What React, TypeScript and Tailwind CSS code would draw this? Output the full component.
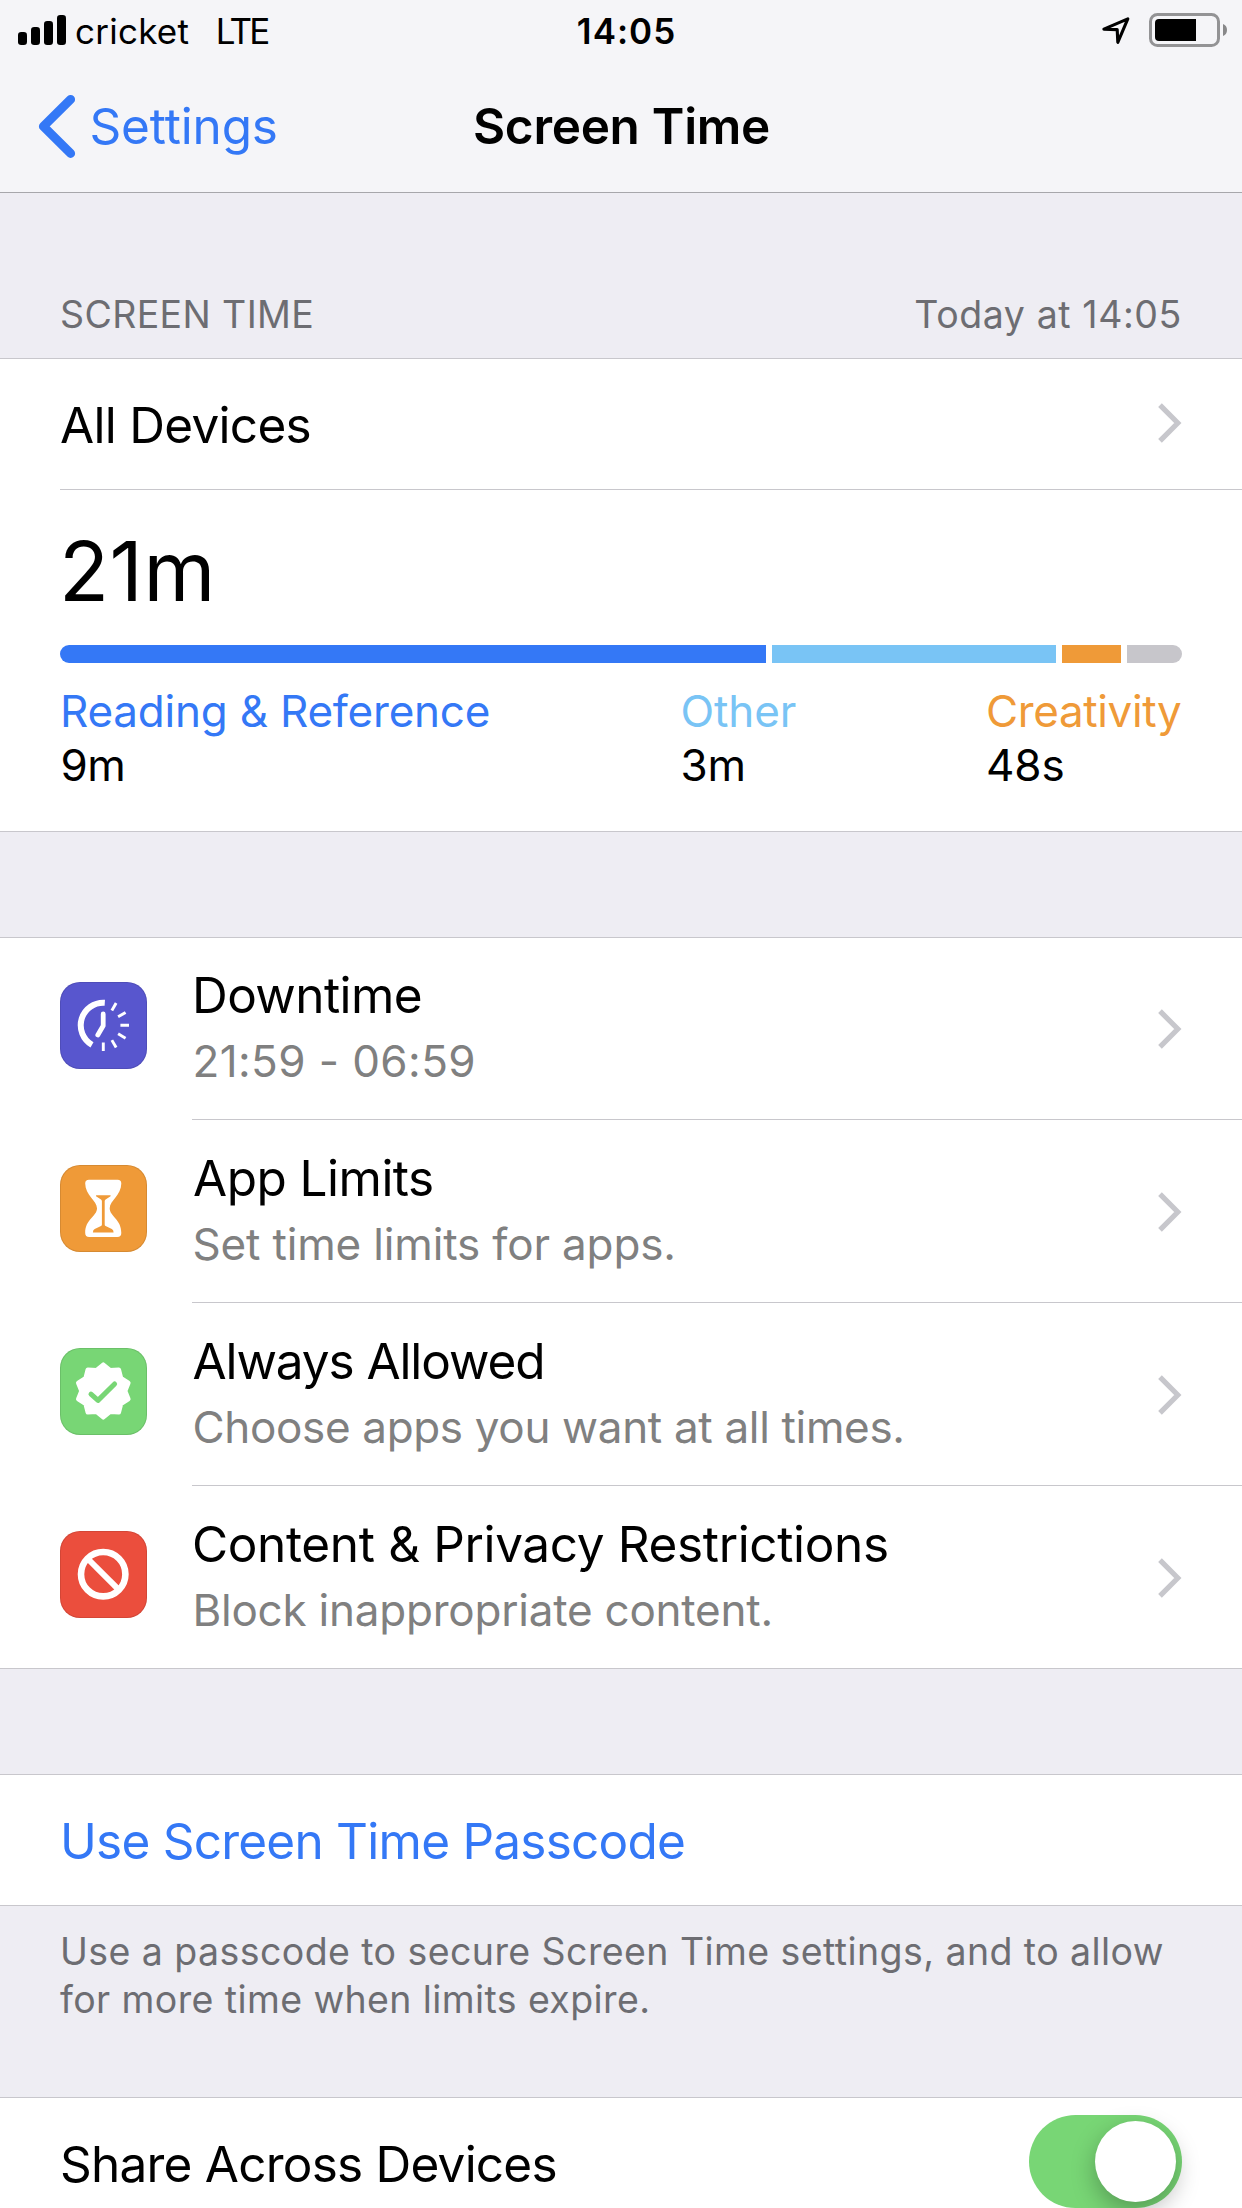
import React from "react";

function Chevron() {
  return (
    <svg width="24" height="40" viewBox="0 0 24 40" className="shrink-0">
      <path d="M2 2.2 L19.8 20 L2 37.8" fill="none" stroke="#c7c7cc" strokeWidth="5.2" />
    </svg>
  );
}

function SignalIcon() {
  return (
    <svg width="48" height="30" viewBox="0 0 48 30" className="-mt-[2px] shrink-0">
      <rect x="0" y="17" width="9" height="13" rx="3.2" />
      <rect x="13" y="12" width="9" height="18" rx="3.2" />
      <rect x="26" y="6" width="9" height="24" rx="3.2" />
      <rect x="39" y="0" width="9" height="30" rx="3.2" />
    </svg>
  );
}

function LocationIcon() {
  return (
    <svg width="28" height="28" viewBox="0 0 28 28" className="shrink-0">
      <path
        d="M1.9 12.1 L25.8 1.9 L15.8 25.3 L15.2 12.6 Z"
        fill="none"
        stroke="#000"
        strokeWidth="3.1"
        strokeLinejoin="round"
      />
    </svg>
  );
}

function BatteryIcon() {
  return (
    <svg width="78" height="34" viewBox="0 0 78 34" className="-mt-[2px] shrink-0">
      <rect x="1.5" y="1.5" width="68" height="31" rx="7" fill="none" stroke="#939395" strokeWidth="3" />
      <path d="M10 6 H47 V28 H10 Q6 28 6 24 V10 Q6 6 10 6 Z" />
      <path d="M74 11 Q78 12.5 78 17 Q78 21.5 74 23 Z" fill="#88888a" />
    </svg>
  );
}

const TICKS = [30, 60, 90, 120, 150, 180];

function DowntimeGlyph() {
  return (
    <g fill="none" stroke="#fff">
      <path d="M44.8 20.7 A22.6 22.6 0 0 0 32 62.8" strokeWidth="6" />
      <path d="M43.2 32 V43.8 L37.8 53" strokeWidth="4.8" strokeLinecap="round" strokeLinejoin="round" />
      {TICKS.map((a) => (
        <path key={a} d="M43.3 26.2 V17.6" strokeWidth="2.9" transform={`rotate(${a} 43.3 43.3)`} />
      ))}
    </g>
  );
}

function HourglassGlyph() {
  return (
    <>
      <path
        d="M29 14.7 H57.6 Q61.3 14.7 61.3 18.4 C61.3 30 49.7 35.5 49.7 43.3 C49.7 51.5 61.3 54 61.3 68 Q61.3 72 57.3 72 H29.2 Q25.2 72 25.2 68 C25.2 54 37 51.5 37 43.3 C37 35.5 25.2 30 25.2 18.4 Q25.2 14.7 29 14.7 Z"
        fill="#fff"
      />
      <path
        d="M36.2 30.3 H50.4 Q51.2 30.9 50.2 31.6 L45.6 34.4 Q44.7 35 44.7 36.2 V59.6 Q44.7 60.6 45.6 61.1 L51.8 64 Q53.6 65 53.6 67.4 H32.9 Q32.9 65 34.7 64 L41 61.1 Q41.9 60.6 41.9 59.6 V36.2 Q41.9 35 41 34.4 L36.4 31.6 Q35.4 30.9 36.2 30.3 Z"
        fill="#ef9a38"
      />
    </>
  );
}

const BADGE_POINTS = Array.from({ length: 20 }, (_, i) => {
  const r = i % 2 === 0 ? 26.4 : 21.9;
  const a = (i * Math.PI) / 10;
  return `${(43.3 + r * Math.sin(a)).toFixed(2)},${(43 - r * Math.cos(a)).toFixed(2)}`;
}).join(" ");

function BadgeGlyph() {
  return (
    <>
      <polygon points={BADGE_POINTS} fill="#fff" stroke="#fff" strokeWidth="4.4" strokeLinejoin="round" />
      <path
        d="M31 46.2 L38 52.4 L54.6 36"
        fill="none"
        stroke="#78d675"
        strokeWidth="5"
        strokeLinecap="round"
        strokeLinejoin="round"
      />
    </>
  );
}

function BlockGlyph() {
  return (
    <g fill="none" stroke="#fff">
      <circle cx="43.2" cy="43.2" r="22.2" strokeWidth="6.6" />
      <path d="M28 28 L58.4 58.4" strokeWidth="6" />
    </g>
  );
}

type Item = {
  title: string;
  titleClass: string;
  sub: string;
  subClass: string;
  tile: string;
  glyph: React.ReactNode;
};

const ITEMS: Item[] = [
  {
    title: "Downtime",
    titleClass: "tracking-[-0.59px]",
    sub: "21:59 - 06:59",
    subClass: "tracking-[0.42px]",
    tile: "bg-[#5856ce]",
    glyph: <DowntimeGlyph />,
  },
  {
    title: "App Limits",
    titleClass: "tracking-[-0.52px] pl-px",
    sub: "Set time limits for apps.",
    subClass: "tracking-[-0.15px]",
    tile: "bg-[#ef9a38]",
    glyph: <HourglassGlyph />,
  },
  {
    title: "Always Allowed",
    titleClass: "tracking-[-1.1px] pl-[0.5px]",
    sub: "Choose apps you want at all times.",
    subClass: "tracking-[-0.33px]",
    tile: "bg-[#78d675]",
    glyph: <BadgeGlyph />,
  },
  {
    title: "Content & Privacy Restrictions",
    titleClass: "tracking-[-0.36px]",
    sub: "Block inappropriate content.",
    subClass: "tracking-[-0.22px]",
    tile: "bg-[#eb4e3d]",
    glyph: <BlockGlyph />,
  },
];

function ItemRow({ item, last }: { item: Item; last: boolean }) {
  return (
    <div className="flex h-[183px] pl-[60px]">
      <div
        className={`mt-[45px] mr-[45px] h-[87px] w-[87px] shrink-0 overflow-hidden rounded-[20px] shadow-[inset_0_0_0_1px_rgba(0,0,0,0.1)] ${item.tile}`}
      >
        <svg width="87" height="87" viewBox="0 0 87 87">
          {item.glyph}
        </svg>
      </div>
      <div
        className={`flex flex-1 items-center justify-between border-b pr-[60px] ${
          last ? "border-transparent" : "border-[#c8c7cc]"
        }`}
      >
        <div className="flex flex-col gap-[6px] whitespace-nowrap">
          <div className={`text-[49.5px] leading-[60px] text-black ${item.titleClass}`}>{item.title}</div>
          <div className={`pl-[0.4px] text-[44px] leading-[60px] text-[#808080] ${item.subClass}`}>{item.sub}</div>
        </div>
        <div className="flex pt-px">
          <Chevron />
        </div>
      </div>
    </div>
  );
}

export default function App() {
  return (
    <div className="h-[2208px] w-[1242px] overflow-hidden bg-[#eeedf3] font-['Inter',sans-serif] text-black">
      <header className="h-[193px] border-b border-[#a7a7ab] bg-[#f5f5f8]">
        <div className="grid h-[62px] grid-cols-3 items-center text-[35px]">
          <div className="flex items-center pl-[18px]">
            <SignalIcon />
            <span className="ml-[9px] tracking-[0.25px]">cricket</span>
            <span className="ml-[26.5px] tracking-[-2.75px]">LTE</span>
          </div>
          <div className="pl-[11px] text-center font-semibold tracking-[0.98px]">14:05</div>
          <div className="flex items-center justify-end gap-[19px] pr-[15px]">
            <LocationIcon />
            <BatteryIcon />
          </div>
        </div>
        <div className="grid h-[128px] grid-cols-3 items-center text-[49.5px] whitespace-nowrap">
          <div className="flex items-center pl-[38px] text-[#3478f6]">
            <svg width="38" height="64" viewBox="0 0 38 64" className="shrink-0">
              <path
                d="M32.6 5.4 L5.4 32.4 L32.6 59.4"
                fill="none"
                stroke="currentColor"
                strokeWidth="9"
                strokeLinecap="round"
                strokeLinejoin="round"
              />
            </svg>
            <span className="ml-[13.5px] tracking-[-0.15px]">Settings</span>
          </div>
          <h1 className="pl-px text-center font-semibold tracking-[-0.3px]">Screen Time</h1>
        </div>
      </header>

      <div className="flex h-[165px] items-end justify-between pr-[60px] pb-[19px] pl-[60px] text-[37.5px] leading-[48px] text-[#6d6d72]">
        <span className="tracking-[0.37px]">SCREEN TIME</span>
        <span className="tracking-[0.59px]">Today at 14:05</span>
      </div>

      <section className="border-y border-[#c8c7cc] bg-white">
        <div className="ml-[60px] flex h-[131px] items-center justify-between border-b border-[#c8c7cc] pr-[60px]">
          <span className="pt-[2px] text-[49.5px] leading-[60px] tracking-[-0.7px]">All Devices</span>
          <div className="-mt-[3px] flex">
            <Chevron />
          </div>
        </div>
        <div className="px-[60px] pt-[32px] pb-[39px]">
          <div className="-ml-px text-[82px] leading-[100px] tracking-[0.6px]">21m</div>
          <div className="mt-[23px] flex h-[18px] gap-[6px] overflow-hidden rounded-full">
            <div className="w-[706px] bg-[#3478f6]" />
            <div className="w-[284px] bg-[#79c4f5]" />
            <div className="w-[59px] bg-[#ef9a38]" />
            <div className="flex-1 bg-[#c7c6cb]" />
          </div>
          <div className="mt-[21px] grid grid-cols-[620.5px_305.5px_1fr] text-[44px] leading-[54px] whitespace-nowrap">
            <div>
              <div className="tracking-[-0.22px] text-[#3478f6]">Reading &amp; Reference</div>
              <div className="pl-[0.5px] tracking-[-0.5px]">9m</div>
            </div>
            <div>
              <div className="tracking-[-0.1px] text-[#79c4f5]">Other</div>
              <div className="tracking-[-0.2px]">3m</div>
            </div>
            <div>
              <div className="tracking-[-0.38px] text-[#ef9a38]">Creativity</div>
              <div className="tracking-[-0.1px]">48s</div>
            </div>
          </div>
        </div>
      </section>

      <section className="mt-[105px] border-t border-[#c8c7cc] bg-white">
        <div className="-my-px">
          {ITEMS.map((item, i) => (
            <ItemRow key={item.title} item={item} last={i === ITEMS.length - 1} />
          ))}
        </div>
        <div className="h-px bg-[#c8c7cc]" />
      </section>

      <section className="mt-[105px] flex h-[132px] items-center border-y border-[#c8c7cc] bg-white pt-[2px] pl-[60px]">
        <span className="text-[49.5px] leading-[60px] tracking-[-0.76px] text-[#3478f6]">Use Screen Time Passcode</span>
      </section>

      <div className="h-[191px] pt-[22px] pl-[60px] text-[37.5px] leading-[48px] whitespace-nowrap text-[#6d6d72]">
        <div className="tracking-[0.42px]">Use a passcode to secure Screen Time settings, and to allow</div>
        <div className="tracking-[0.4px]">for more time when limits expire.</div>
      </div>

      <section className="flex h-[132px] items-start justify-between border-t border-[#c8c7cc] bg-white pr-[60px] pl-[60px]">
        <span className="mt-[36px] text-[49.5px] leading-[60px] tracking-[-0.77px]">Share Across Devices</span>
        <div className="mt-[17px] flex h-[93px] w-[153px] items-center justify-end rounded-full bg-[#78d675] p-[6px]">
          <div className="h-[81px] w-[81px] rounded-full bg-white shadow-[0_9px_24px_rgba(0,0,0,0.28)]" />
        </div>
      </section>
    </div>
  );
}
